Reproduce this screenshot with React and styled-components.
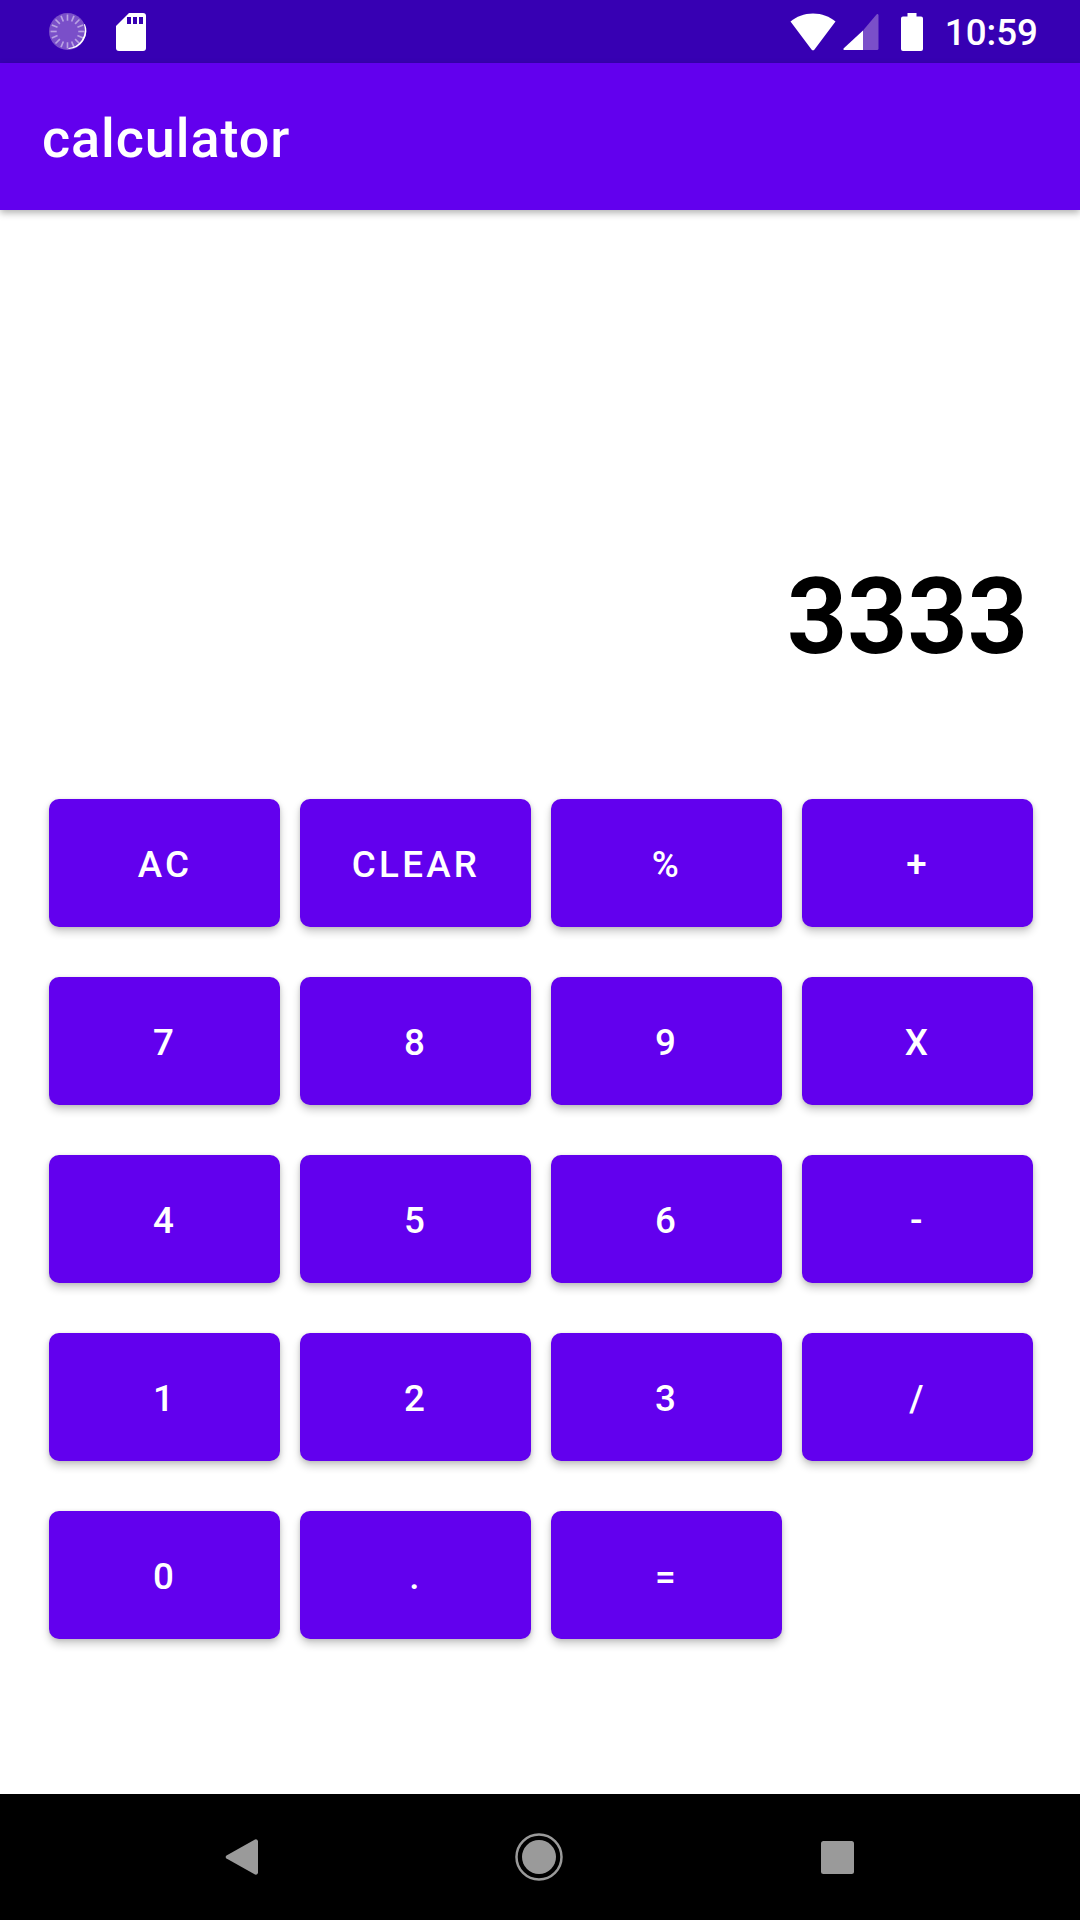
import React from "react";
import styled, { createGlobalStyle } from "styled-components";

const GlobalStyle = createGlobalStyle`
    html, body {
        margin: 0;
        padding: 0;
        background: #fff;
    }
    * { box-sizing: border-box; }
`;

const Screen = styled.div`
    width: 1080px;
    height: 1920px;
    display: flex;
    flex-direction: column;
    font-family: Roboto, "Liberation Sans", sans-serif;
    overflow: hidden;
`;

const StatusBar = styled.div`
    height: 63px;
    flex: none;
    display: flex;
    align-items: center;
    padding: 0 42px 0 49px;
    background: #3700b3;
    color: #fff;
`;

const StatusLeft = styled.div`
    display: flex;
    align-items: center;
    gap: 29px;
    flex: 1;
`;

const StatusRight = styled.div`
    display: flex;
    align-items: center;
`;

const Time = styled.span`
    font-size: 36.75px;
    font-weight: 500;
    margin-left: 22px;
    padding-top: 2px;
`;

const AppBar = styled.header`
    height: 147px;
    flex: none;
    display: flex;
    align-items: center;
    padding: 3px 0 0 42px;
    background: #6200ee;
    box-shadow: 0 3px 7px rgba(0, 0, 0, 0.3);
    position: relative;
`;

const Title = styled.h1`
    margin: 0;
    font-size: 54px;
    font-weight: 500;
    letter-spacing: 0.9px;
    color: #fff;
`;

const Main = styled.main`
    flex: 1;
    display: flex;
    flex-direction: column;
    background: #fff;
`;

const Display = styled.div`
    height: 589px;
    display: flex;
    align-items: flex-end;
    justify-content: flex-end;
    padding: 0 52px 120px 0;
    font-size: 105px;
    font-weight: 700;
    line-height: 123px;
    color: #000;
`;

const Keypad = styled.div`
    display: grid;
    grid-template-columns: repeat(4, 231px);
    grid-auto-rows: 128px;
    column-gap: 20px;
    row-gap: 50px;
    padding-left: 49px;
`;

const Key = styled.button`
    border: none;
    border-radius: 10px;
    padding: 2px 0 0 1px;
    background: #6200ee;
    color: #fff;
    font-family: inherit;
    font-size: 36.75px;
    font-weight: 500;
    letter-spacing: 3.3px;
    box-shadow: 0 5px 8px rgba(0, 0, 0, 0.2), 0 1px 4px rgba(0, 0, 0, 0.12);
`;

const NavBar = styled.nav`
    height: 126px;
    flex: none;
    display: flex;
    align-items: center;
    background: #000;
    padding-left: 225px;
`;

const Spacer = styled.div`
    width: ${(p) => p.$width}px;
    flex: none;
    display: flex;
`;

const keys = [
    "AC", "CLEAR", "%", "+",
    "7", "8", "9", "X",
    "4", "5", "6", "-",
    "1", "2", "3", "/",
    "0", ".", "=",
];

const SpinnerIcon = () => {
    const ticks = [];
    for (let i = 0; i < 16; i++) {
        ticks.push(
            <line
                key={i}
                x1="18"
                y1="1.5"
                x2="18"
                y2="7.5"
                stroke="#b9a2e3"
                strokeWidth="1.6"
                transform={`rotate(${i * 22.5} 18 18)`}
            />
        );
    }
    return (
        <svg width="38" height="38" viewBox="0 0 37 37">
            <circle cx="18" cy="18" r="18" fill="#7a4fc9" />
            {ticks}
            <path d="M34.5 11 A18 18 0 0 1 19 34.5 A17 17 0 0 0 34.5 11Z" fill="#fff" stroke="#fff" strokeWidth="1" />
        </svg>
    );
};

const SdIcon = () => (
    <svg width="30" height="38" viewBox="0 0 30 38">
        <path
            d="M13 0H27a3 3 0 0 1 3 3V35a3 3 0 0 1-3 3H3a3 3 0 0 1-3-3V13Z"
            fill="#fff"
        />
        <path d="M11 4h4v7h-4zM17 4h4v7h-4zM23 4h4v7h-4z" fill="#3700b3" />
    </svg>
);

const WifiIcon = () => (
    <svg width="46" height="38" viewBox="0 0 46 38">
        <path
            d="M23 0.5C14 0.5 6.5 3.5 0.5 8.5L21.5 36.5a2 2 0 0 0 3 0L45.5 8.5C39.5 3.5 32 0.5 23 0.5Z"
            fill="#fff"
        />
    </svg>
);

const SignalIcon = () => (
    <svg width="36" height="38" viewBox="0 0 36 38">
        <path d="M20 17.5V37H34a1.5 1.5 0 0 0 1.5-1.5V2.5C35.5 1 34.5 0.5 33.5 1.5Z" fill="#7a4fc9" />
        <path d="M20 17.5V37H1.5C0.5 37 0 36 0.8 35.2Z" fill="#fff" />
    </svg>
);

const BatteryIcon = () => (
    <svg width="22" height="38" viewBox="0 0 22 38">
        <path
            d="M6.5 0h9v3.5H20a2 2 0 0 1 2 2V36a2 2 0 0 1-2 2H2a2 2 0 0 1-2-2V5.5a2 2 0 0 1 2-2h4.5Z"
            fill="#fff"
        />
    </svg>
);

const BackIcon = () => (
    <svg width="35" height="38" viewBox="0 0 35 38">
        <path
            d="M30 1.5a2.5 2.5 0 0 1 3 1.5V35a2.5 2.5 0 0 1-3 1.5L1.5 20.5a2 2 0 0 1 0-3Z"
            fill="#9a9a9a"
        />
    </svg>
);

const HomeIcon = () => (
    <svg width="48" height="48" viewBox="0 0 48 48">
        <circle cx="24" cy="24" r="22.5" fill="none" stroke="#9a9a9a" strokeWidth="2.5" />
        <circle cx="24" cy="24" r="17" fill="#9a9a9a" />
    </svg>
);

const RecentsIcon = () => (
    <svg width="33" height="33" viewBox="0 0 33 33">
        <rect width="33" height="33" rx="2.5" fill="#9a9a9a" />
    </svg>
);

const App = () => {
    return (
        <Screen>
            <GlobalStyle />
            <StatusBar>
                <StatusLeft>
                    <SpinnerIcon />
                    <SdIcon />
                </StatusLeft>
                <StatusRight>
                    <WifiIcon />
                    <Spacer $width={7} />
                    <SignalIcon />
                    <Spacer $width={22} />
                    <BatteryIcon />
                    <Time>10:59</Time>
                </StatusRight>
            </StatusBar>
            <AppBar>
                <Title>calculator</Title>
            </AppBar>
            <Main>
                <Display>3333</Display>
                <Keypad>
                    {keys.map((k) => (
                        <Key key={k}>{k}</Key>
                    ))}
                </Keypad>
            </Main>
            <NavBar>
                <Spacer $width={290}>
                    <BackIcon />
                </Spacer>
                <Spacer $width={306}>
                    <HomeIcon />
                </Spacer>
                <RecentsIcon />
            </NavBar>
        </Screen>
    );
};

export default App;
